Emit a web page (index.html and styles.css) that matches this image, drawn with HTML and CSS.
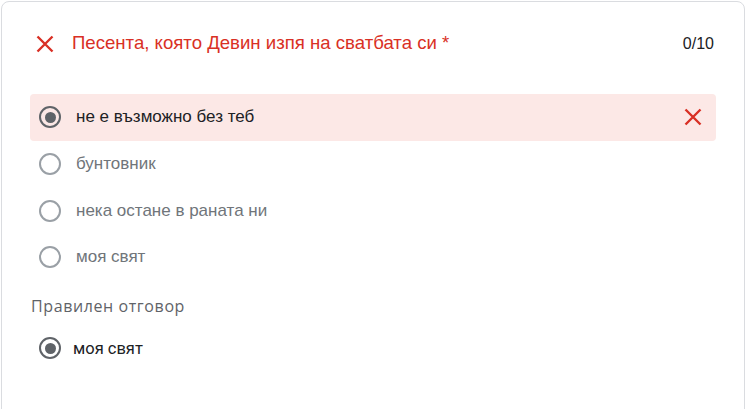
FILE: index.html
```html
<!DOCTYPE html>
<html lang="bg">
<head>
<meta charset="utf-8">
<link rel="stylesheet" href="styles.css">
</head>
<body>
<div class="card">
  <div class="header">
    <svg class="xicon" width="18" height="18" viewBox="0 0 18 18"><path d="M1.5 1.5L16.5 16.5M16.5 1.5L1.5 16.5" stroke="#d93025" stroke-width="2.4" fill="none"/></svg>
    <div class="title">Песента, която Девин изпя на сватбата си *</div>
    <div class="score">0/10</div>
  </div>
  <div class="options">
    <div class="opt wrong">
      <span class="radio checked"></span>
      <span class="label dark">не е възможно без теб</span>
      <svg class="xicon right" width="18" height="18" viewBox="0 0 18 18"><path d="M1.5 1.5L16.5 16.5M16.5 1.5L1.5 16.5" stroke="#d93025" stroke-width="2.4" fill="none"/></svg>
    </div>
    <div class="opt"><span class="radio"></span><span class="label">бунтовник</span></div>
    <div class="opt"><span class="radio"></span><span class="label">нека остане в раната ни</span></div>
    <div class="opt"><span class="radio"></span><span class="label">моя свят</span></div>
  </div>
  <div class="correct-title">Правилен отговор</div>
  <div class="correct">
    <span class="radio checked"></span>
    <span class="label answer">моя свят</span>
  </div>
</div>
</body>
</html>
```
FILE: styles.css
```css
html, body { margin: 0; padding: 0; background: #fff; }
body { font-family: "Liberation Sans", Arial, sans-serif; }
.card {
  margin: 1px;
  height: 420px;
  border: 1px solid #dadce0;
  border-radius: 8px;
  box-sizing: border-box;
  padding: 0 28px 0 28px;
}
.header {
  display: flex;
  align-items: center;
  height: 84px;
  padding: 0 0 0 6px;
}
.xicon { flex: none; }
.title {
  color: #d93025;
  font-size: 18.6px;
  margin-left: 18px;
  flex: 1;
  padding-bottom: 3px;
}
.score {
  color: #202124;
  font-size: 16px;
  margin-right: 2px;
  padding-bottom: 1px;
}
.options { margin-top: 8px; }
.opt {
  display: flex;
  align-items: center;
  height: 46.7px;
  padding-left: 9px;
  border-radius: 4px;
}
.opt.wrong { background: #fce8e6; }
.right { margin-left: auto; margin-right: 14px; }
.radio {
  flex: none;
  width: 22px;
  height: 22px;
  box-sizing: border-box;
  border: 2px solid #9aa0a6;
  border-radius: 50%;
  display: flex;
  align-items: center;
  justify-content: center;
}
.radio.checked { border-color: #5f6368; }
.radio.checked::after {
  content: "";
  width: 11px;
  height: 11px;
  border-radius: 50%;
  background: #5f6368;
}
.label {
  margin-left: 15px;
  font-size: 17px;
  color: #70757a;
}
.label.dark { color: #202124; }
.correct-title {
  margin-top: 14px;
  margin-left: 1px;
  font-family: "Open Sans", sans-serif;
  font-size: 16px;
  letter-spacing: 0.6px;
  color: #5f6368;
  height: 20px;
}
.correct {
  display: flex;
  align-items: center;
  height: 47px;
  margin-top: 10px;
  padding-left: 9px;
}
.label.answer {
  margin-left: 12px;
  color: #202124;
  font-family: "Roboto", sans-serif;
  font-size: 16.5px;
}
```
